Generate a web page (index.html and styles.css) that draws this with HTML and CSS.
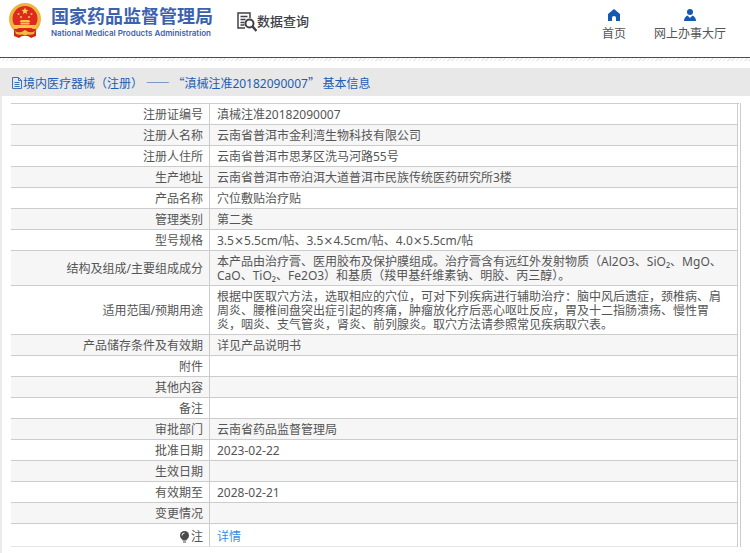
FILE: index.html
```html
<!DOCTYPE html>
<html lang="zh-CN">
<head>
<meta charset="utf-8">
<title>数据查询 - 国家药品监督管理局</title>
<link rel="stylesheet" href="styles.css">
</head>
<body>
<header class="header">
  <svg class="emblem" viewBox="0 0 34 36" aria-hidden="true">
    <path d="M6 26h22v7l-5 2-3-2h-6l-3 2-5-2z" fill="#d5251d"/>
    <circle cx="17" cy="16" r="16" fill="#edb53c"/>
    <circle cx="17" cy="15.500" r="12.500" fill="#de2a20"/>
    <path d="M17 4.500l1 2.200 2.400.2-1.800 1.600.5 2.400-2.100-1.200-2.100 1.200.5-2.400-1.800-1.600 2.400-.2z" fill="#fbd34a"/>
    <g fill="#f8c840"><circle cx="10.500" cy="11" r="1"/><circle cx="23.500" cy="11" r="1"/><circle cx="13" cy="14" r="1"/><circle cx="21" cy="14" r="1"/>
    <path d="M13 17h8l1.500 2h-11zM12.500 19.500h9v2h-9zM6 22h22v3H6z"/></g>
    <path d="M6 26h22l-1 4c-5 2-15 2-20 0z" fill="#d5251d"/>
    <path d="M7 28q5 3 10-1 5 4 10 1l-1 3q-5 2-9-1-4 3-9 1z" fill="#edb53c"/>
    <circle cx="17" cy="30" r="2.500" fill="#f3bd3f"/>
  </svg>
  <div class="brand">
    <span class="brand-zh">国家药品监督管理局</span>
    <span class="brand-en">National Medical Products Administration</span>
  </div>
  <div class="query">
    <svg class="query-icon" viewBox="0 0 20 20" fill="none" stroke="#404148" aria-hidden="true">
      <path d="M13 6V1H1v15h7" stroke-width="1.500"/>
      <path d="M3.500 4.500h7M3.500 7.500h5M3.500 10.500h4M3.500 13h4" stroke-width="1.300"/>
      <circle cx="12.500" cy="11.500" r="4" stroke-width="2"/>
      <path d="M15.500 14.500l4 4.500" stroke-width="2.500"/>
    </svg>
    <span>数据查询</span>
  </div>
  <nav class="nav">
    <a href="#">
      <svg viewBox="0 0 12 12" fill="#1459b3" aria-hidden="true"><path d="M6 0l6 5v7H8V8.500Q8 7 6 7T4 8.500V12H0V5z"/></svg>
      首页
    </a>
    <a href="#">
      <svg viewBox="0 0 12 12" fill="#1459b3" aria-hidden="true"><circle cx="6" cy="3" r="3"/><path d="M3.500 6.500L6 9l2.500-2.500Q12 8 12 12H0Q0 8 3.500 6.500z"/></svg>
      网上办事大厅
    </a>
  </nav>
</header>
<main class="panel">
  <h1 class="title">
    <svg viewBox="0 0 10 12" fill="none" stroke="#3d72bd" aria-hidden="true"><path d="M.500.500h6l3 3v8h-9zM6.500.500v3h3M2.500 5.500h5M2.500 7.500h5M2.500 9.500h5"/></svg>
    <span>境内医疗器械（注册） —— “滇械注准<span class="num">20182090007</span>” 基本信息</span>
  </h1>
  <div class="frame">
  <table class="info">
    <tbody>
      <tr><th scope="row">注册证编号</th><td>滇械注准20182090007</td></tr>
      <tr><th scope="row">注册人名称</th><td>云南省普洱市金利湾生物科技有限公司</td></tr>
      <tr><th scope="row">注册人住所</th><td>云南省普洱市思茅区洗马河路55号</td></tr>
      <tr><th scope="row">生产地址</th><td>云南省普洱市帝泊洱大道普洱市民族传统医药研究所3楼</td></tr>
      <tr><th scope="row">产品名称</th><td>穴位敷贴治疗贴</td></tr>
      <tr><th scope="row">管理类别</th><td>第二类</td></tr>
      <tr><th scope="row">型号规格</th><td>3.5<span class="times">×</span>5.5cm/帖、3.5<span class="times">×</span>4.5cm/帖、4.0<span class="times">×</span>5.5cm/帖</td></tr>
      <tr><th scope="row">结构及组成/主要组成成分</th><td>本产品由治疗膏、医用胶布及保护膜组成。治疗膏含有远红外发射物质（Al2O3、SiO₂、MgO、CaO、TiO₂、Fe2O3）和基质（羧甲基纤维素钠、明胶、丙三醇）。</td></tr>
      <tr><th scope="row">适用范围/预期用途</th><td>根据中医取穴方法，选取相应的穴位，可对下列疾病进行辅助治疗：脑中风后遗症，颈椎病、肩周炎、腰椎间盘突出症引起的疼痛，肿瘤放化疗后恶心呕吐反应，胃及十二指肠溃疡、慢性胃炎，咽炎、支气管炎，肾炎、前列腺炎。取穴方法请参照常见疾病取穴表。</td></tr>
      <tr><th scope="row">产品储存条件及有效期</th><td>详见产品说明书</td></tr>
      <tr><th scope="row">附件</th><td></td></tr>
      <tr><th scope="row">其他内容</th><td></td></tr>
      <tr><th scope="row">备注</th><td></td></tr>
      <tr><th scope="row">审批部门</th><td>云南省药品监督管理局</td></tr>
      <tr><th scope="row">批准日期</th><td>2023-02-22</td></tr>
      <tr><th scope="row">生效日期</th><td></td></tr>
      <tr><th scope="row">有效期至</th><td>2028-02-21</td></tr>
      <tr><th scope="row">变更情况</th><td></td></tr>
      <tr class="note"><th scope="row"><svg viewBox="0 0 9 12" aria-hidden="true"><circle cx="4.500" cy="4.500" r="4.500" fill="#4b4b4b"/><path d="M2.500 8h4v1.500h-4zM3 10.500h3v1H3z" fill="#4b4b4b"/><path d="M2 4.500Q2 2 4.500 2" fill="none" stroke="#fff"/></svg>注</th><td><a href="#">详情</a></td></tr>
    </tbody>
  </table>
  </div>
</main>
</body>
</html>
```
FILE: styles.css
```css
* { box-sizing: border-box; }

body {
  margin: 0;
  background: #fff;
  color: #555;
  font: 12px/14px "Noto Sans", "Noto Sans CJK SC", sans-serif;
}

a { color: inherit; text-decoration: none; }
svg { display: block; flex: none; }

.header {
  display: flex;
  align-items: flex-start;
  height: 58px;
  padding: 3px 24px 0 8px;
  border-bottom: 1px solid #1b5790;
}

.emblem { width: 34px; height: 36px; }

.brand {
  display: flex;
  flex-direction: column;
  margin: 3px 0 0 9px;
  color: #3c62ae;
  white-space: nowrap;
}

.brand-zh {
  font: bold 18px/18px "Noto Sans CJK SC", sans-serif;
}

.brand-en {
  margin-top: 3px;
  font: 600 8px/12px Inter, sans-serif;
}

.query {
  display: flex;
  margin: 9px 0 0 24px;
  color: #404148;
  font-size: 13px;
  font-weight: 500;
  line-height: 18px;
}

.query-icon { width: 20px; height: 20px; }

.nav {
  display: flex;
  gap: 28px;
  margin: 6px 0 0 auto;
}

.nav a {
  display: flex;
  flex-direction: column;
  align-items: center;
  gap: 6px;
}

.nav svg { width: 12px; height: 12px; }

.panel::before {
  content: "";
  display: block;
  height: 10px;
  background: repeating-linear-gradient(135deg, #e9e9e9 0 1px, #fff 1px 3px) 0 0 / 100% 3px no-repeat;
}

.title {
  display: flex;
  align-items: center;
  gap: 1px;
  height: 28px;
  margin: 0;
  padding: 2px 12px 0;
  background: #e8e8e8;
  color: #1c5db5;
  font: 12px/14px "Noto Sans CJK SC", sans-serif;
}

.title svg { width: 10px; height: 12px; }
.num { font-family: "Noto Sans", sans-serif; }
.times { font-family: "DejaVu Sans", sans-serif; line-height: 1; }

.frame {
  padding: 7px 9px 6px;
  border-left: 2px solid #ebebeb;
}

.info {
  width: 100%;
  border-collapse: separate;
  border-spacing: 0;
  border-top: 1px solid #ccc;
  border-right: 4px double #ccc;
}

.info th,
.info td {
  height: 21px;
  padding: 4px 7px 2px;
  border-bottom: 1px solid #ccc;
  font-weight: 400;
}

.info th {
  width: 199px;
  padding-right: 6px;
  border-right: 1px solid #ccc;
  text-align: right;
}

.info tr:nth-child(even) { background: #f6f6f6; }

.info .note th,
.info .note td {
  height: 23px;
  padding-top: 6px;
  border-bottom-color: #e5e5e5;
}

.note svg {
  display: inline-block;
  width: 9px;
  height: 12px;
  margin-right: 2px;
  vertical-align: -2px;
}

.note a { color: #3a8ee6; }
```
